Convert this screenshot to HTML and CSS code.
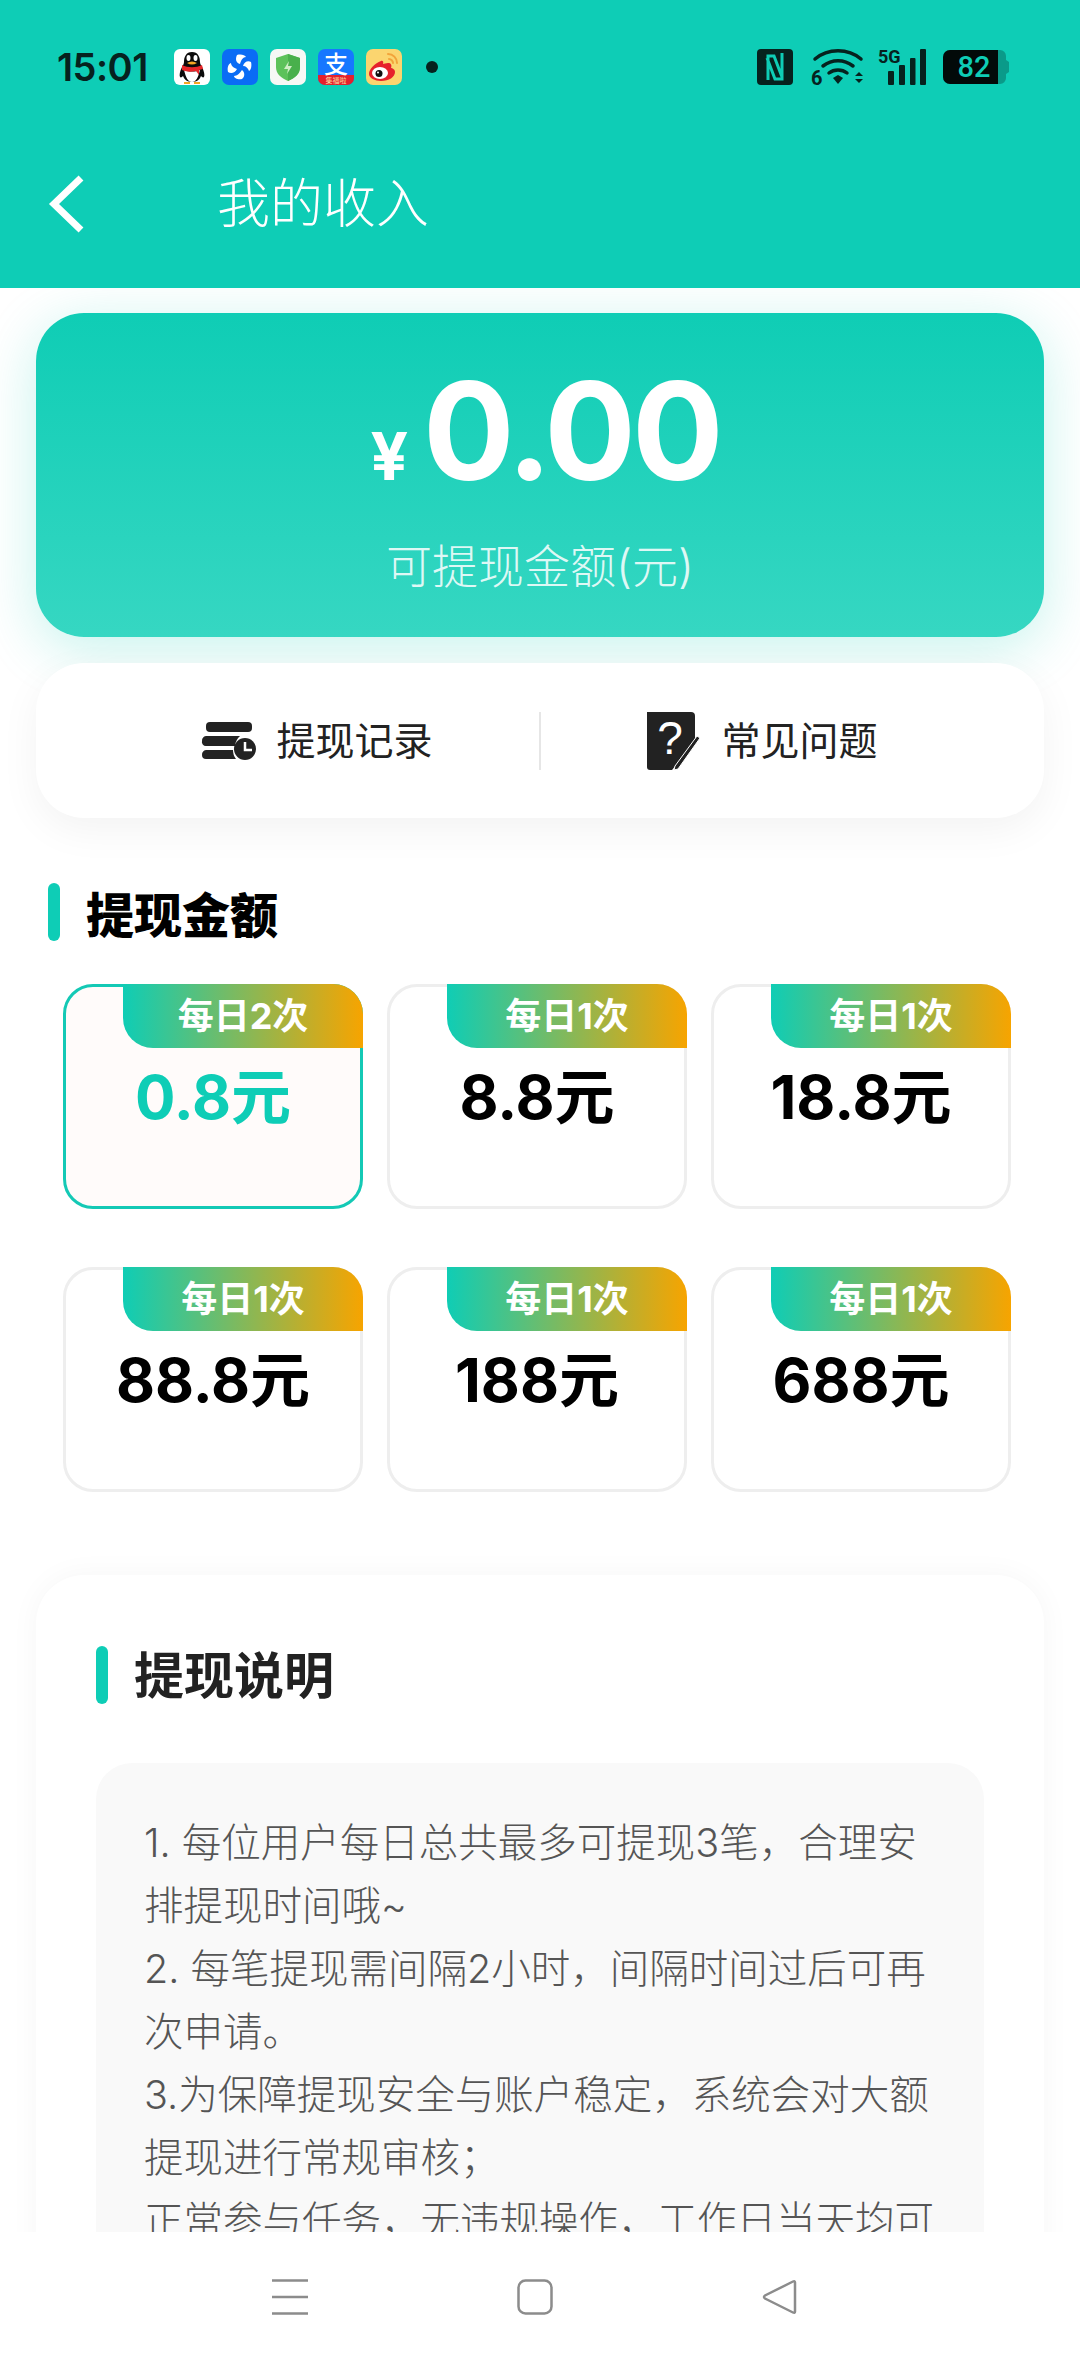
FILE: index.html
```html
<!DOCTYPE html>
<html lang="zh-CN">
<head>
    <meta charset="UTF-8">
    <meta name="viewport" content="width=device-width, initial-scale=1.0">
    <title>我的收入</title>
    <link rel="stylesheet" href="styles.css">
</head>
<body>
<div class="app">

    <!-- Status bar and title -->
    <div class="topbar">
        <div class="status">
            <span class="time">15:01</span>
            <div class="notify">
                <svg class="app-icon" viewBox="0 0 36 36">
                    <rect width="36" height="36" rx="6" fill="#fff"/>
                    <path d="M18 3c-6 0-8 5-8 10 0 2-1 3-2 5-2 4-3 8-2 10 1 1 2 0 3-1 1 3 4 6 9 6s8-3 9-6c1 1 2 2 3 1 1-2 0-6-2-10-1-2-2-3-2-5 0-5-2-10-8-10z" fill="#0b0b0b"/>
                    <path d="M10 21c2 8 4 12 8 12s6-4 8-12c-5 2-11 2-16 0z" fill="#fff"/>
                    <path d="M8 16c6 3 14 3 20 0l1 4-4 1 0 5-3-4c-5 1-9 1-14-1z" fill="#e8262a"/>
                    <ellipse cx="14.500" cy="9" rx="2" ry="3" fill="#fff"/>
                    <ellipse cx="21.500" cy="9" rx="2" ry="3" fill="#fff"/>
                    <path d="M13 14q5-3 10 0-5 3-10 0z" fill="#f5a623"/>
                    <path d="M10 33h6v2h-6zM20 33h6v2h-6z" fill="#f5a623"/>
                </svg>
                <svg class="app-icon" viewBox="0 0 36 36">
                    <rect width="36" height="36" rx="7" fill="#0a6cf5"/>
                    <g fill="#fff">
                        <path d="M18 15c-4-1-5-5-3-9 4-1 8 0 9 2-3 0-5 3-6 7z"/>
                        <path d="M21 17c1-4 5-6 8-4 1 4 0 8-2 9-1-3-3-5-6-5z"/>
                        <path d="M20 21c3 2 3 7 0 9-4 1-8-1-8-3 3 0 6-3 8-6z"/>
                        <path d="M15 20c-2 4-6 5-9 3-1-4 0-8 3-9 0 3 3 5 6 6z"/>
                    </g>
                </svg>
                <svg class="app-icon" viewBox="0 0 36 36">
                    <rect width="36" height="36" rx="7" fill="#f6f8f5"/>
                    <path d="M18 5l12 4v9c0 7-5 11-12 14-7-3-12-7-12-14V9z" fill="#5cc25a"/>
                    <path d="M18 5l12 4v9c0 7-5 11-12 14z" fill="#49b04c"/>
                    <path d="M19 12l-5 8h4l-1 5 5-8h-4z" fill="#cfeec5"/>
                </svg>
                <svg class="app-icon" viewBox="0 0 36 36">
                    <rect width="36" height="36" rx="7" fill="#1677ff"/>
                    <path d="M0 26h36v3a7 7 0 0 1-7 7H7a7 7 0 0 1-7-7z" fill="#e5202c"/>
                    <text x="18" y="24" class="ali-mark">支</text>
                    <text x="18" y="34" class="ali-small">集福啦</text>
                </svg>
                <svg class="app-icon" viewBox="0 0 36 36">
                    <rect width="36" height="36" rx="7" fill="#fbd56f"/>
                    <path d="M15 12c-6 2-12 8-12 13 0 4 6 7 12 7 8 0 14-4 14-9 0-3-3-4-4-4 1-3 0-5-3-5-2 0-4 1-5 1 1-3-1-4-2-3z" fill="#e6212c"/>
                    <ellipse cx="14" cy="24" rx="8" ry="6" fill="#fff"/>
                    <circle cx="13" cy="24.500" r="3.500" fill="#111"/>
                    <circle cx="12" cy="23.500" r="1" fill="#fff"/>
                    <path d="M22 5c5 0 9 4 9 9M23 10c2 0 4 2 4 4" fill="none" stroke="#f2a33a" stroke-width="2" stroke-linecap="round"/>
                </svg>
                <span class="dot"></span>
            </div>
            <div class="sys">
                <svg class="sys-nfc" viewBox="0 0 36 36">
                    <rect width="36" height="36" rx="4" fill="#06221e"/>
                    <path d="M11 31V7h6l8 21M25 4v26h-7L10 9" fill="none" stroke="#0ecdb6" stroke-width="3"/>
                </svg>
                <svg class="sys-wifi" viewBox="0 0 54 38">
                    <path d="M4 11c13-11 33-11 46 0M12 18c9-7 21-7 30 0" fill="none" stroke="#06221e" stroke-width="3.500" stroke-linecap="round"/>
                    <path d="M18 25c5-4 13-4 18 0" fill="none" stroke="#06221e" stroke-width="3.500" stroke-linecap="round"/>
                    <path d="M22 30l5-3 5 3-5 6z" fill="#06221e"/>
                    <path d="M44 28l4-4 4 4zM44 31l4 4 4-4z" fill="#06221e"/>
                    <text x="0" y="37" class="sys-text wifi-six">6</text>
                </svg>
                <svg class="sys-signal" viewBox="0 0 48 36">
                    <text x="0" y="14" class="sys-text">5G</text>
                    <rect x="10" y="22" width="6" height="14" rx="1" fill="#06221e"/>
                    <rect x="21" y="16" width="6" height="20" rx="1" fill="#06221e"/>
                    <rect x="32" y="9" width="5.500" height="27" rx="1" fill="#06221e"/>
                    <rect x="42" y="0" width="6" height="36" rx="1" fill="#06221e"/>
                </svg>
                <svg class="sys-batt" viewBox="0 0 66 34">
                    <path d="M7 0h50a6 6 0 0 1 6 6v4l3 2v10l-3 2v4a6 6 0 0 1-6 6H7a7 7 0 0 1-7-7V7a7 7 0 0 1 7-7z" fill="#0a9a89"/>
                    <path d="M7 0h48v34H7a7 7 0 0 1-7-7V7a7 7 0 0 1 7-7z" fill="#020a09"/>
                    <text x="31" y="27" class="batt-text">82</text>
                </svg>
            </div>
        </div>
        <div class="titlebar">
            <svg class="back" viewBox="0 0 36 58">
                <path d="M33 3L6 29l27 26" fill="none" stroke="#fff" stroke-width="7"/>
            </svg>
            <h1>我的收入</h1>
        </div>
    </div>

    <div class="content">

        <!-- Balance -->
        <div class="hero">
            <div class="balance"><span class="yen">¥</span><span class="money">0.00</span></div>
            <p>可提现金额(元)</p>
        </div>

        <div class="actions">
            <div class="action">
                <svg class="icon-record" viewBox="0 0 54 38">
                    <rect x="4" y="0" width="46" height="10" rx="4" fill="#222"/>
                    <path d="M4 14h34a15 15 0 0 0-5 10H4a4 4 0 0 1-4-5 5 5 0 0 1 4-5z" fill="#222"/>
                    <path d="M4 28h27a14 14 0 0 0 3 9H4a4 4 0 0 1-4-4 5 5 0 0 1 4-5z" fill="#222"/>
                    <circle cx="43" cy="27" r="11" fill="#222"/>
                    <path d="M43 20v8h7" fill="none" stroke="#fff" stroke-width="2.500"/>
                </svg>
                <span>提现记录</span>
            </div>
            <div class="divider"></div>
            <div class="action">
                <svg class="icon-faq" viewBox="0 0 54 58">
                    <path d="M0 0h44a4 4 0 0 1 4 4v26L25 58H3a3 3 0 0 1-3-3z" fill="#222"/>
                    <text x="23" y="42" class="faq-mark">?</text>
                    <path d="M28 54l22-30 3 2-22 31-4 1z" fill="#222" stroke="#fff" stroke-width="1"/>
                </svg>
                <span>常见问题</span>
            </div>
        </div>

        <!-- Amounts -->
        <div class="section-title first">
            <i class="mark"></i>
            <h2>提现金额</h2>
        </div>

        <div class="amounts">
            <div class="amount active"><div class="badge">每日2次</div><div class="value">0.8元</div></div>
            <div class="amount"><div class="badge">每日1次</div><div class="value">8.8元</div></div>
            <div class="amount"><div class="badge">每日1次</div><div class="value">18.8元</div></div>
            <div class="amount"><div class="badge">每日1次</div><div class="value">88.8元</div></div>
            <div class="amount"><div class="badge">每日1次</div><div class="value">188元</div></div>
            <div class="amount"><div class="badge">每日1次</div><div class="value">688元</div></div>
        </div>

        <!-- Notes -->
        <div class="info">
            <div class="section-title">
                <i class="mark"></i>
                <h2 class="soft">提现说明</h2>
            </div>
            <div class="notes">
                <p>1. 每位用户每日总共最多可提现3笔，合理安排提现时间哦~</p>
                <p>2. 每笔提现需间隔2小时，间隔时间过后可再次申请。</p>
                <p>3.为保障提现安全与账户稳定，系统会对大额提现进行常规审核；</p>
                <p>正常参与任务，无违规操作，工作日当天均可到账。</p>
            </div>
        </div>
    </div>

    <!-- System nav -->
    <div class="navkeys">
        <svg class="key" viewBox="0 0 36 36">
            <path d="M0 1.500h36M0 18h36M0 34.500h36" fill="none" stroke="#8c8c8c" stroke-width="2.500"/>
        </svg>
        <svg class="key" viewBox="0 0 36 36">
            <rect x="1.500" y="1.500" width="33" height="33" rx="7" fill="none" stroke="#8c8c8c" stroke-width="2.500"/>
        </svg>
        <svg class="key" viewBox="0 0 36 36">
            <path d="M33 3.500v29q0 2-2 1L3 19.500q-2-1.500 0-3L31 2.500q2-1 2 1z" fill="none" stroke="#8c8c8c" stroke-width="2.500"/>
        </svg>
    </div>
</div>
</body>
</html>
```

FILE: styles.css
```css
/* Reset and Global Styles */
* {
    margin: 0;
    padding: 0;
    box-sizing: border-box;
}

body {
    font-family: "Inter", "Noto Sans CJK SC", sans-serif;
    background-color: #fff;
}

svg {
    overflow: visible;
}

.app {
    width: 1080px;
    height: 2362px;
    display: flex;
    flex-direction: column;
    overflow: hidden;
}

/* Top bar */
.topbar {
    height: 288px;
    flex-shrink: 0;
    background-color: #0ecdb6;
    padding: 49px 0 0;
}

.status {
    height: 36px;
    display: flex;
    align-items: center;
    padding: 0 71px 0 57px;
}

.time {
    font-size: 38px;
    font-weight: 600;
    letter-spacing: -0.5px;
    color: #06221e;
    width: 117px;
}

.notify {
    display: flex;
    align-items: center;
    gap: 12px;
}

.app-icon {
    width: 36px;
    height: 36px;
}

.ali-mark {
    font-size: 24px;
    font-weight: 500;
    fill: #fff;
    text-anchor: middle;
}

.ali-small {
    font-size: 7px;
    fill: #ffd9a0;
    text-anchor: middle;
}

.dot {
    width: 12px;
    height: 12px;
    border-radius: 50%;
    background-color: #06221e;
    margin-left: 12px;
}

.sys {
    margin-left: auto;
    display: flex;
    align-items: center;
}

.sys-nfc {
    width: 36px;
    height: 36px;
    margin-right: 18px;
}

.sys-wifi {
    width: 54px;
    height: 38px;
    margin-right: 13px;
}

.sys-signal {
    width: 48px;
    height: 36px;
    margin-right: 17px;
}

.sys-batt {
    width: 66px;
    height: 34px;
}

.sys-text {
    font-family: "Roboto", sans-serif;
    font-size: 18px;
    font-weight: 700;
    fill: #06221e;
}

.wifi-six {
    font-size: 20px;
}

.batt-text {
    font-family: "Roboto", sans-serif;
    font-size: 29px;
    font-weight: 500;
    fill: #0ecdb6;
    text-anchor: middle;
}

.titlebar {
    display: flex;
    align-items: center;
    height: 58px;
    margin-top: 90px;
    padding-left: 48px;
}

.back {
    width: 36px;
    height: 58px;
}

.titlebar h1 {
    font-size: 53px;
    line-height: 58px;
    font-weight: 300;
    color: #fff;
    margin-left: 133px;
}

/* Page Content */
.content {
    flex: 1;
    min-height: 0;
    overflow: hidden;
    padding: 25px 36px 0;
}

.hero {
    height: 324px;
    border-radius: 48px;
    background: linear-gradient(180deg, #0fcdb5 0%, #36d7c2 100%);
    box-shadow: 0 12px 56px rgba(15, 205, 181, 0.24);
    color: #fff;
    display: flex;
    flex-direction: column;
    align-items: center;
    padding-top: 50px;
}

.balance {
    display: flex;
    align-items: baseline;
    height: 136px;
    line-height: 136px;
    font-weight: 700;
    padding-left: 10px;
}

.yen {
    font-size: 66px;
    margin-right: 15px;
}

.money {
    font-size: 136px;
    letter-spacing: -4px;
}

.hero p {
    font-size: 46px;
    line-height: 60px;
    color: rgba(255, 255, 255, 0.85);
    margin-top: 37px;
    font-weight: 300;
}

.actions {
    height: 155px;
    margin-top: 26px;
    padding: 0 60px;
    border-radius: 48px;
    background-color: #fff;
    box-shadow: 0 12px 40px rgba(0, 0, 0, 0.05);
    display: flex;
    align-items: center;
}

.action {
    flex: 1;
    display: flex;
    align-items: center;
    justify-content: center;
    gap: 20px;
    font-size: 39px;
    color: #222;
}

.action span {
    padding-bottom: 6px;
}

.icon-record {
    width: 54px;
    height: 38px;
}

.icon-faq {
    width: 54px;
    height: 58px;
}

.faq-mark {
    font-family: "Liberation Sans", sans-serif;
    font-size: 46px;
    fill: #fff;
    text-anchor: middle;
}

.divider {
    width: 2px;
    height: 58px;
    background-color: #e6e6e6;
}

/* Section titles */
.section-title {
    display: flex;
    align-items: center;
    height: 58px;
    gap: 26px;
}

.section-title.first {
    margin: 65px 0 0 12px;
}

.section-title h2 {
    font-size: 48px;
    font-weight: 900;
    color: #000;
}

.section-title h2.soft {
    font-size: 50px;
    font-weight: 700;
    color: #222;
    padding-bottom: 6px;
}

.mark {
    width: 12px;
    height: 58px;
    border-radius: 6px;
    background-color: #0ecdb6;
}

/* Amount cards */
.amounts {
    display: grid;
    grid-template-columns: repeat(3, 300px);
    gap: 58px 24px;
    margin: 43px 0 0 27px;
}

.amount {
    position: relative;
    height: 225px;
    border: 3px solid #eee;
    border-radius: 30px;
    text-align: center;
    background-color: #fff;
}

.amount.active {
    border-color: #14c9b5;
    background-color: #fffbfa;
}

.badge {
    position: absolute;
    top: -3px;
    right: -3px;
    width: 240px;
    height: 64px;
    line-height: 64px;
    font-size: 36px;
    font-weight: 700;
    color: #fff;
    background: linear-gradient(90deg, #0fcdb5 0%, #f7a400 100%);
    border-radius: 0 30px 0 30px;
}

.value {
    margin-top: 75px;
    font-size: 60px;
    line-height: 70px;
    font-weight: 700;
    color: #000;
}

.amount.active .value {
    color: #0ecdb6;
}

/* Notes card */
.info {
    margin-top: 83px;
    padding: 71px 60px 60px;
    border-radius: 48px;
    background-color: #fff;
    box-shadow: 0 0 30px rgba(0, 0, 0, 0.04);
}

.notes {
    margin-top: 59px;
    padding: 49px 48px;
    border-radius: 36px;
    background-color: #f9f9f9;
    font-size: 39.500px;
    font-weight: 300;
    line-height: 63px;
    color: #555;
}

/* System nav */
.navkeys {
    height: 130px;
    flex-shrink: 0;
    background-color: #fff;
    position: relative;
    z-index: 1;
    display: flex;
    justify-content: center;
    gap: 209px;
    padding: 47px 10px 0 0;
}

.key {
    width: 36px;
    height: 36px;
}
```
